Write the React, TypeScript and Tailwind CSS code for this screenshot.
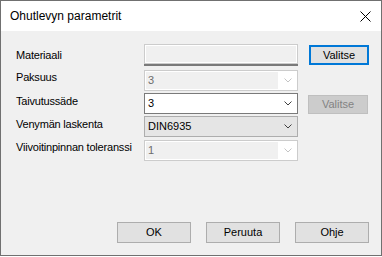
import React from "react";

const font = { fontFamily: '"Liberation Sans", Arial, sans-serif' };

function Chevron({ disabled }: { disabled?: boolean }) {
    return (
        <svg width="8" height="5" viewBox="0 0 8 5" className="block">
            <polyline
                points="0.5,0.5 4,4 7.5,0.5"
                fill="none"
                stroke={disabled ? "#c4c4c4" : "#404040"}
                strokeWidth="1"
            />
        </svg>
    );
}

function Label({ text, pad }: { text: string; pad: string }) {
    return (
        <div className={`w-[128px] shrink-0 text-[11px] leading-[13px] tracking-[-0.2px] text-black ${pad}`}>
            {text}
        </div>
    );
}

function DisabledCombo({ value }: { value: string }) {
    return (
        <div className="w-[154px] h-[21px] border border-[#cccccc] bg-white flex p-px">
            <div className="flex-1 bg-[#f0f0f0] flex items-center pl-[2px] text-[11px] text-[#6d6d6d]">{value}</div>
            <div className="w-[18px] flex items-center justify-center pl-[1px]">
                <Chevron disabled />
            </div>
        </div>
    );
}

export default function App() {
    return (
        <div className="bg-white w-[382px] h-[257px]" style={font}>
            <div className="w-[382px] h-[256px] border border-[#707070] flex flex-col">
                <div className="h-[30px] bg-white flex items-center justify-between pl-[9px] pr-[10px]">
                    <span className="text-[12px] text-black">Ohutlevyn parametrit</span>
                    <svg width="11" height="11" viewBox="0 0 11 11">
                        <path d="M0.5 0.5 L10.5 10.5 M10.5 0.5 L0.5 10.5" stroke="#000" strokeWidth="1" />
                    </svg>
                </div>

                <div className="flex-1 bg-[#f0f0f0] flex flex-col pl-[15px] pr-[12px] pb-[12px]">
                    {/* Materiaali */}
                    <div className="flex items-start mt-[13px]">
                        <Label text="Materiaali" pad="pt-[5px]" />
                        <div className="flex flex-col">
                            <div className="w-[154px] h-[20px] border border-[#cccccc] bg-[#f0f0f0] shadow-[inset_1px_1px_0_#ffffff,inset_-1px_-1px_0_#ffffff]" />
                            <div className="w-[154px] h-[2px] bg-[#7a7a7a]" />
                        </div>
                        <button className="ml-[11px] mt-px w-[60px] h-[20px] border-2 border-[#0078d7] bg-[#e1e1e1] text-[11px] text-black leading-none">
                            Valitse
                        </button>
                    </div>

                    {/* Paksuus */}
                    <div className="flex items-start mt-[4px]">
                        <Label text="Paksuus" pad="pt-[1px]" />
                        <DisabledCombo value="3" />
                    </div>

                    {/* Taivutussäde */}
                    <div className="flex items-start mt-[2px]">
                        <Label text="Taivutussäde" pad="pt-[2px]" />
                        <div className="w-[154px] h-[21px] border border-[#7a7a7a] bg-white flex">
                            <div className="flex-1 flex items-center pl-[3px] text-[11px] text-black">3</div>
                            <div className="w-[19px] flex items-center justify-center">
                                <Chevron />
                            </div>
                        </div>
                        <button
                            disabled
                            className="ml-[10px] mt-[2px] w-[60px] h-[19px] border border-[#bfbfbf] bg-[#cccccc] text-[11px] text-[#838383] leading-none"
                        >
                            Valitse
                        </button>
                    </div>

                    {/* Venymän laskenta */}
                    <div className="flex items-start mt-[2px]">
                        <Label text="Venymän laskenta" pad="pt-[2px]" />
                        <div className="w-[154px] h-[21px] border border-[#adadad] bg-[#e5e5e5] flex">
                            <div className="flex-1 flex items-center pl-[3px] text-[11px] text-black">DIN6935</div>
                            <div className="w-[19px] flex items-center justify-center">
                                <Chevron />
                            </div>
                        </div>
                    </div>

                    {/* Viivoitinpinnan toleranssi */}
                    <div className="flex items-start mt-[3px]">
                        <Label text="Viivoitinpinnan toleranssi" pad="pt-[1px]" />
                        <DisabledCombo value="1" />
                    </div>

                    <div className="flex-1" />

                    <div className="flex justify-end gap-[15px]">
                        {["OK", "Peruuta", "Ohje"].map((t) => (
                            <button
                                key={t}
                                className="w-[74px] h-[21px] border border-[#adadad] bg-[#e1e1e1] text-[11px] text-black leading-none"
                            >
                                {t}
                            </button>
                        ))}
                    </div>
                </div>
            </div>
        </div>
    );
}
